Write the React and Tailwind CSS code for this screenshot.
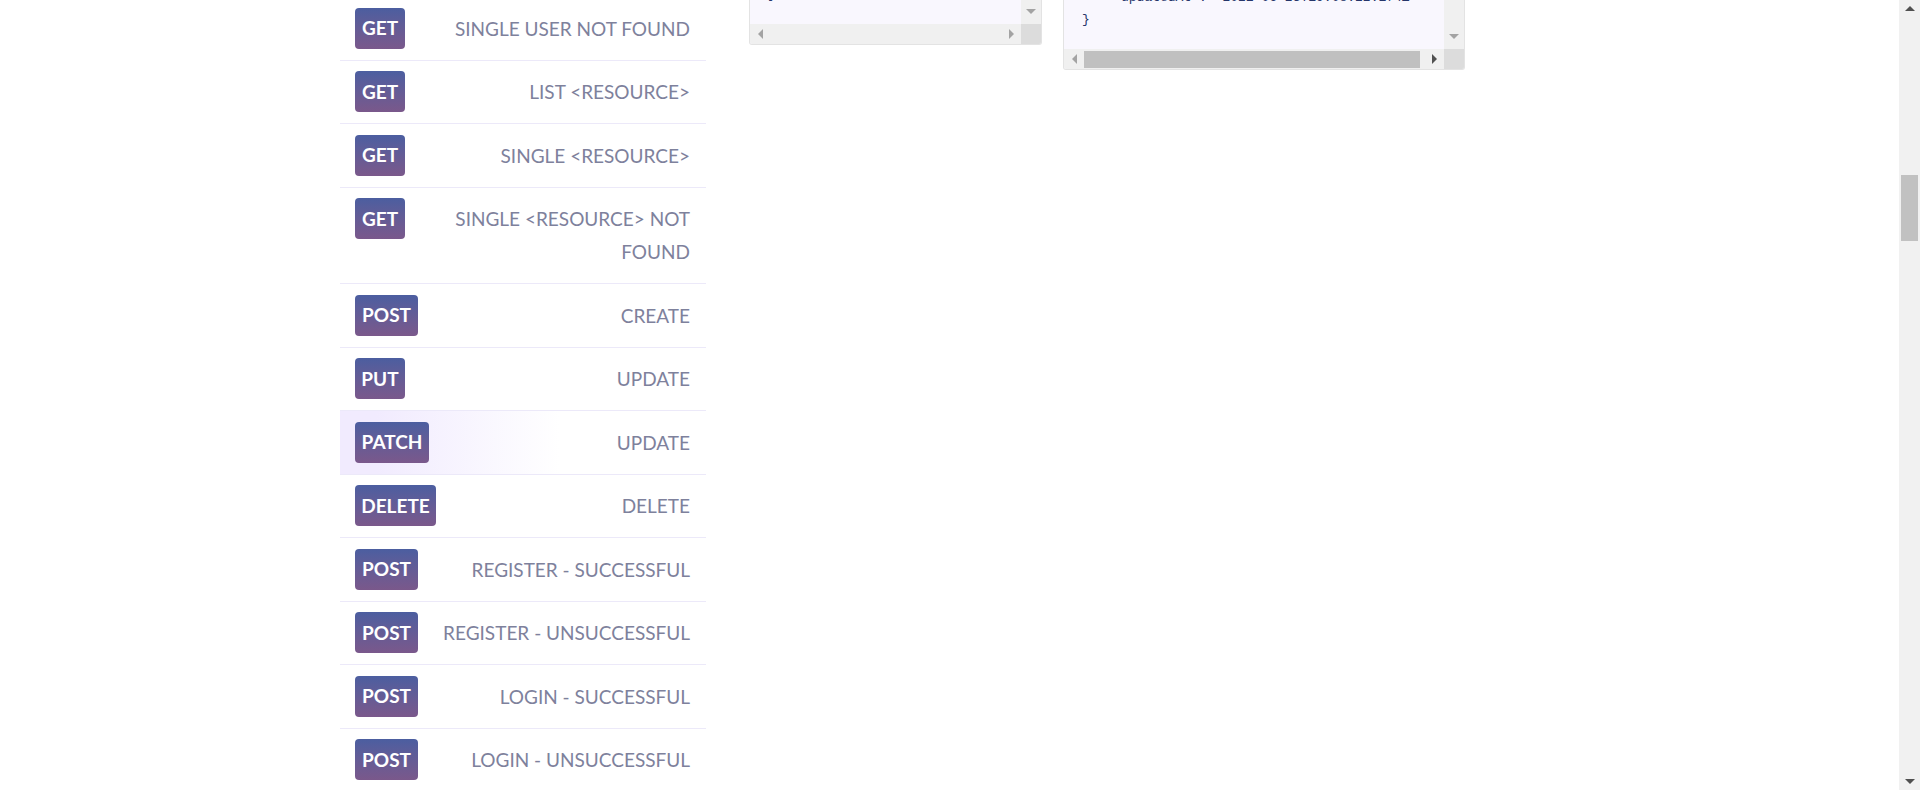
import React from 'react';

const routes = [
  { method: 'GET', label: 'SINGLE USER NOT FOUND' },
  { method: 'GET', label: 'LIST <RESOURCE>' },
  { method: 'GET', label: 'SINGLE <RESOURCE>' },
  { method: 'GET', label: 'SINGLE <RESOURCE> NOT FOUND' },
  { method: 'POST', label: 'CREATE' },
  { method: 'PUT', label: 'UPDATE' },
  { method: 'PATCH', label: 'UPDATE', active: true },
  { method: 'DELETE', label: 'DELETE' },
  { method: 'POST', label: 'REGISTER - SUCCESSFUL' },
  { method: 'POST', label: 'REGISTER - UNSUCCESSFUL' },
  { method: 'POST', label: 'LOGIN - SUCCESSFUL' },
  { method: 'POST', label: 'LOGIN - UNSUCCESSFUL' },
];

const badgeWidth = {
  GET: 'w-[50px]',
  PUT: 'w-[50px]',
  POST: 'w-[63px]',
  PATCH: 'w-[74px]',
  DELETE: 'w-[81px]',
};

function Arrow({ dir, color = '#a3a3a3' }) {
  const pts = {
    up: '0,5 5,0 10,5',
    down: '0,0 10,0 5,5',
    left: '5,0 5,10 0,5',
    right: '0,0 0,10 5,5',
  }[dir];
  const vertical = dir === 'up' || dir === 'down';
  return (
    <svg width={vertical ? 10 : 5} height={vertical ? 5 : 10} viewBox={vertical ? '0 0 10 5' : '0 0 5 10'}>
      <polygon points={pts} fill={color} />
    </svg>
  );
}

function RouteRow({ method, label, active }) {
  return (
    <div
      className={
        'flex items-start gap-3 border-b border-[#ece9f9] pl-[15px] pr-[16px] py-[10.75px] ' +
        (active ? 'bg-gradient-to-r from-[#f1ebfe] from-10% to-white to-60%' : '')
      }
    >
      <span
        className={
          'flex h-[41px] shrink-0 items-center justify-center rounded-[4px] bg-gradient-to-b from-[#4b5ea0] to-[#7a588b] text-[19px] font-bold text-white ' +
          badgeWidth[method]
        }
      >
        {method}
      </span>
      <span className="flex-1 py-[4px] text-right text-[19px] leading-[33px] text-[#7e819c]">{label}</span>
    </div>
  );
}

function CodePanel({ width, codeHeight, offset, lines, thumb }) {
  return (
    <div className={'overflow-hidden rounded-b-[3px] border border-t-0 border-[#e3e3e3] bg-[#f9f7fe] ' + width}>
      <div className={'flex ' + codeHeight}>
        <div className="flex-1 overflow-hidden pl-[18px] font-['Liberation_Mono',monospace] text-[13px] leading-[22px] text-[#26356a] whitespace-pre">
          <div className={offset}>
            {lines.map((l, i) => (
              <div key={i}>{l}</div>
            ))}
          </div>
        </div>
        <div className="flex w-[20px] flex-col items-center justify-end bg-[#f0f0f0] pb-[10px]">
          <Arrow dir="down" />
        </div>
      </div>
      <div className="flex h-[20px] bg-[#f0f0f0]">
        <div className="flex w-[20px] items-center justify-center">
          <Arrow dir="left" />
        </div>
        <div className="flex flex-1 pt-[2px] pb-[1px] pr-[4px]">
          {thumb ? <div className="flex-1 bg-[#c0c0c0]" /> : null}
        </div>
        <div className="flex w-[20px] items-center justify-center">
          <Arrow dir="right" color={thumb ? '#505050' : '#a3a3a3'} />
        </div>
        <div className="w-[20px] bg-[#dcdcdc]" />
      </div>
    </div>
  );
}

export default function App() {
  return (
    <div className="flex h-[790px] w-[1920px] overflow-hidden bg-white font-['Lato',sans-serif]">
      <div className="flex flex-1 items-start">
        <nav className="-mt-[3px] ml-[340px] w-[366px] shrink-0">
          {routes.map((r, i) => (
            <RouteRow key={i} {...r} />
          ))}
        </nav>
        <div className="ml-[43px] flex items-start gap-[21px]">
          <CodePanel width="w-[293px]" codeHeight="h-[24px]" offset="-mt-[16px]" lines={['}']} />
          <CodePanel
            width="w-[402px]"
            codeHeight="h-[49px]"
            offset="-mt-[13px]"
            lines={['    "updatedAt": "2021-06-23T19:08:22.174Z"', '}']}
            thumb
          />
        </div>
      </div>
      <div className="flex w-[21px] flex-col bg-[#f1f1f1]">
        <div className="flex h-[17px] items-center justify-center">
          <Arrow dir="up" color="#505050" />
        </div>
        <div className="flex-1 px-[2px]">
          <div className="mt-[158px] h-[66px] bg-[#c1c1c1]" />
        </div>
        <div className="flex h-[17px] items-center justify-center">
          <Arrow dir="down" color="#505050" />
        </div>
      </div>
    </div>
  );
}
